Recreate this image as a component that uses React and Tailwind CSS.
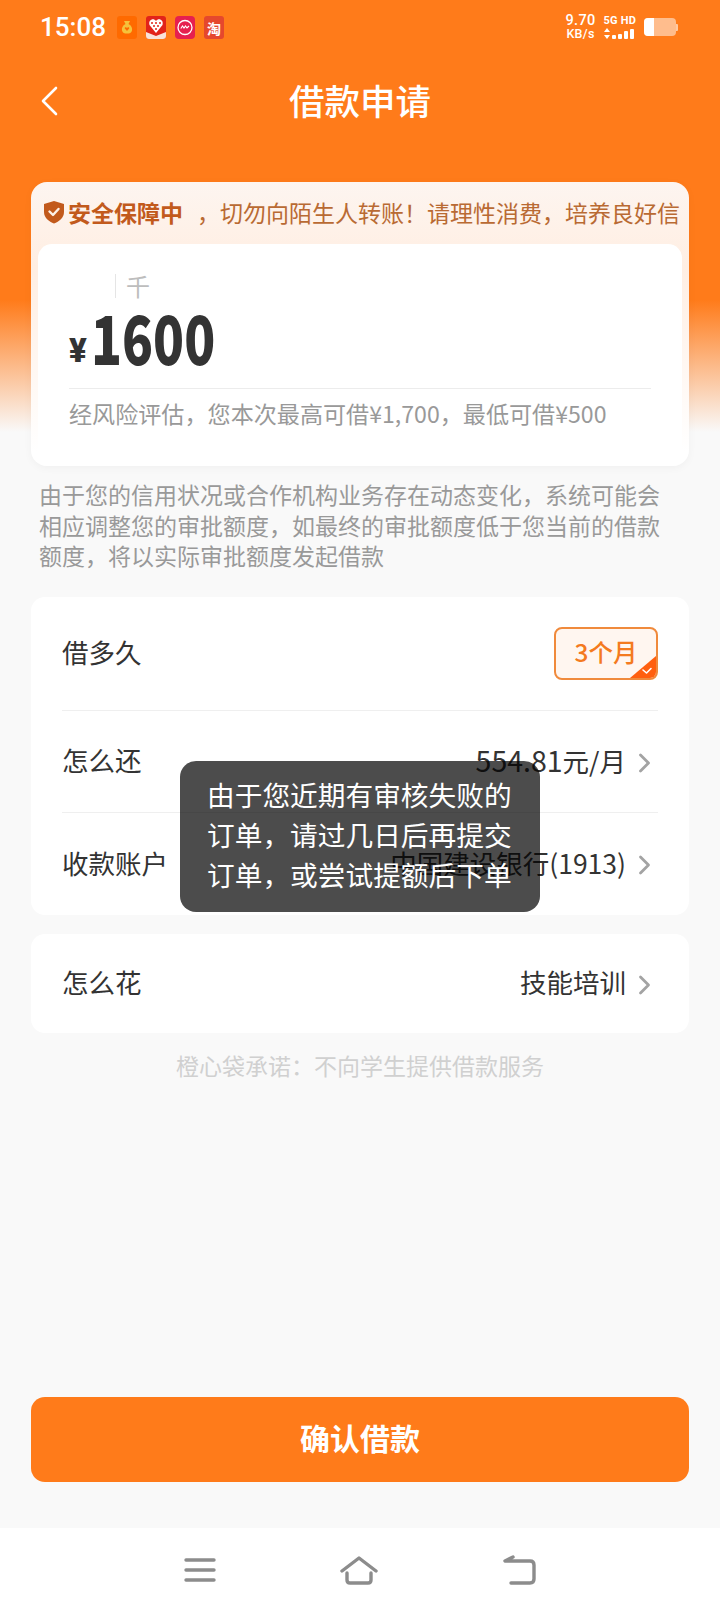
const cjk = "font-['Noto_Sans_CJK_SC','Noto_Sans',sans-serif]";

const Shield = () => (
    <svg width="22" height="24" viewBox="0 0 22 24" className="shrink-0">
        <path d="M11 1 L21 4 V12 C21 18 16 21.5 11 23.5 C6 21.5 1 18 1 12 V4 Z" fill="#c25a1c" />
        <path d="M6.5 11.5 L10 15 L15.5 9" fill="none" stroke="#fdf1e8" strokeWidth="2.4" strokeLinecap="round" strokeLinejoin="round" />
    </svg>
);

const Chevron = () => (
    <svg width="13" height="20" viewBox="0 0 13 20" fill="none" stroke="#a3a3a3" strokeWidth="2.8" strokeLinecap="round" strokeLinejoin="round" className="ml-[12px] mr-[7px] mt-[3px]">
        <path d="M2.5 2 L10.5 10 L2.5 18" />
    </svg>
);

const StatusApps = () => (
    <div className="flex items-center gap-[9px] ml-[11px] mt-[1px]">
        <svg width="20" height="23" viewBox="0 0 20 23">
            <rect width="20" height="23" rx="3" fill="#ff6a00" />
            <path d="M7 5 H13 L11.5 8 C14.5 9.5 15.5 12 15 14.5 C14.5 17 12.5 17.5 10 17.5 C7.5 17.5 5.5 17 5 14.5 C4.5 12 5.5 9.5 8.5 8 Z" fill="#f5c23a" />
            <path d="M10 15 L7.8 12.6 C7.4 11.4 9.2 10.8 10 11.9 C10.8 10.8 12.6 11.4 12.2 12.6 Z" fill="#ff6a00" />
        </svg>
        <svg width="20" height="23" viewBox="0 0 20 23">
            <rect width="20" height="23" rx="3" fill="#e2231a" />
            <path d="M10 17 L3.5 9 C2 4 7.5 1.5 10 5 C12.5 1.5 18 4 16.5 9 Z" fill="#fff" />
            <path d="M5 7 H7 M9 7 H11 M13 7 H15 M7 10 H9 M11 10 H13 M9 13 H11" stroke="#e2231a" strokeWidth="1.6" />
            <path d="M0 16 L10 20 L20 16 V20 Q20 23 17 23 H3 Q0 23 0 20 Z" fill="#f8e3da" />
        </svg>
        <svg width="20" height="23" viewBox="0 0 20 23">
            <rect width="20" height="23" rx="4" fill="#e6204f" />
            <circle cx="10" cy="11.5" r="7" fill="none" stroke="#fff" strokeWidth="1.3" />
            <path d="M5.8 12.5 L7.5 10 L9 12 L10.5 10 L12 12 L14 10" fill="none" stroke="#fff" strokeWidth="1.1" />
        </svg>
        <div className="w-[20px] h-[23px] rounded-[3px] bg-[#e5482d] flex items-center justify-center">
            <span className="text-[14px] leading-[20px] font-bold text-white font-['Noto_Sans_CJK_SC',sans-serif]">淘</span>
        </div>
    </div>
);

const StatusRight = () => (
    <div className="flex items-center text-white font-['Roboto',sans-serif]">
        <div className="flex flex-col items-center gap-[1px] text-[12.5px] leading-[12px] font-medium tracking-[0.3px]">
            <span className="text-[14.5px] leading-[13px]">9.70</span>
            <span>KB/s</span>
        </div>
        <div className="flex flex-col ml-[8px] gap-[2px]">
            <span className="text-[11px] leading-[11px] font-bold tracking-[0.2px]">5G HD</span>
            <div className="flex items-end gap-[2px] h-[11px]">
                <svg width="6" height="11" viewBox="0 0 6 11">
                    <path d="M3 0 L6 4 H0 Z M3 11 L0 7 H6 Z" fill="#fff" />
                </svg>
                <div className="w-[4px] h-[4px] bg-white rounded-[1px]" />
                <div className="w-[4px] h-[5px] bg-white rounded-[1px]" />
                <div className="w-[4px] h-[8px] bg-white rounded-[1px]" />
                <div className="w-[4px] h-[10px] bg-white rounded-[1px]" />
            </div>
        </div>
        <div className="flex items-center ml-[8px]">
            <div className="w-[32px] h-[18px] rounded-[4px] bg-white/50 overflow-hidden">
                <div className="w-[10px] h-full bg-white" />
            </div>
            <div className="w-[2px] h-[7px] bg-white/60 rounded-r-[1px]" />
        </div>
    </div>
);

const Row = ({ label, children, border }) => (
    <div className={`h-full flex items-center justify-between ${border ? "border-b border-[#efefef]" : ""}`}>
        <span className="text-[26.5px] text-[#333333] pb-[2px]">{label}</span>
        <div className="flex items-center">
            <span className="text-[26.5px] text-[#333333] pb-[2px]">{children}</span>
            <Chevron />
        </div>
    </div>
);

const Toast = () => (
    <div className="absolute left-[180px] top-[761px] w-[360px] h-[151px] rounded-[16px] bg-black/70 pl-[27px] pt-[13px] text-[27.7px] leading-[40px] text-white whitespace-nowrap">
        <p>由于您近期有审核失败的</p>
        <p>订单，请过几日后再提交</p>
        <p>订单，或尝试提额后下单</p>
    </div>
);

const App = () => {
    return (
        <div className={`relative w-[720px] h-[1612px] overflow-hidden flex flex-col ${cjk} bg-[linear-gradient(180deg,#ff7b1a_0px,#ff7b1a_300px,#f9f9f9_432px,#f9f9f9_100%)]`}>
            {/* status bar */}
            <div className="h-[54px] pl-[40px] pr-[42px] flex items-center justify-between">
                <div className="flex items-center">
                    <span className="text-[26px] font-medium text-white font-['Roboto',sans-serif]">15:08</span>
                    <StatusApps />
                </div>
                <StatusRight />
            </div>

            {/* nav */}
            <div className="h-[94px] relative flex items-center justify-center">
                <svg width="18" height="30" viewBox="0 0 18 30" fill="none" stroke="#ffffff" strokeWidth="2.6" strokeLinecap="round" strokeLinejoin="round" className="absolute left-[40px]">
                    <path d="M16 2 L3 15 L16 28" />
                </svg>
                <h1 className="text-[35.5px] font-medium text-white pb-[2px]">借款申请</h1>
            </div>

            {/* amount */}
            <div className="mt-[34px] mx-[31px] h-[284px] rounded-[16px] px-[7px] bg-[linear-gradient(180deg,#fdf5f0_0%,#ffeee2_30%,#ffffff_95%)] shadow-[0_2px_8px_rgba(0,0,0,0.04)]">
                <div className="h-[62px] pb-[2px] flex items-center whitespace-nowrap overflow-hidden">
                    <div className="ml-[5px] mr-[3px]"><Shield /></div>
                    <span className="text-[23px] font-bold text-[#c25a1c]">安全保障中</span>
                    <span className="ml-[14px] text-[23px] text-[#b96a33]">，切勿向陌生人转账！请理性消费，培养良好信</span>
                </div>
                <div className="h-[222px] rounded-[14px] bg-white px-[31px]">
                    <div className="pt-[28px] h-[56px] flex items-center pl-[46px]">
                        <div className="w-[1px] h-[24px] bg-[#e5e5e5]" />
                        <span className="ml-[10px] text-[24px] leading-[24px] text-[#bdbdbd]">千</span>
                    </div>
                    <div className="h-[89px] border-b border-[#ececec] flex items-center">
                        <span className="text-[33px] font-black text-[#333333] mt-[14px] font-['Roboto',sans-serif]">¥</span>
                        <span className="ml-[4px] mb-[16px] inline-block origin-left scale-x-[0.75] text-[68px] leading-[68px] font-black text-[#333333]">1600</span>
                    </div>
                    <p className="mt-[9px] text-[23.1px] leading-[30px] text-[#999999] whitespace-nowrap">经风险评估，您本次最高可借¥1,700，最低可借¥500</p>
                </div>
            </div>

            <p className="mt-[13px] ml-[39px] mr-[40px] text-[23px] leading-[30.6px] text-[#999999]">由于您的信用状况或合作机构业务存在动态变化，系统可能会相应调整您的审批额度，如最终的审批额度低于您当前的借款额度，将以实际审批额度发起借款</p>

            {/* loan details */}
            <div className="mt-[26px] mx-[31px] rounded-[14px] bg-white px-[31px]">
                <div className="h-[114px] border-b border-[#efefef] flex items-center justify-between">
                    <span className="text-[26.5px] text-[#333333] pb-[2px]">借多久</span>
                    <div className="relative w-[104px] h-[53px] rounded-[8px] border-2 border-[#f08a3c] bg-[#fff6f0] flex items-center justify-center overflow-hidden">
                        <span className="text-[24.5px] font-medium text-[#f47a20] pb-[2px]">3个月</span>
                        <svg width="26" height="22" viewBox="0 0 26 22" className="absolute right-0 bottom-0">
                            <path d="M26 0 V22 H0 Z" fill="#ff5f0f" />
                            <path d="M13 14 L16.5 17 L21 12.5" fill="none" stroke="#ffffff" strokeWidth="1.6" strokeLinecap="round" strokeLinejoin="round" />
                        </svg>
                    </div>
                </div>
                <div className="h-[102px]">
                    <Row label="怎么还" border><span className="text-[28.5px]">554.81</span>元/月</Row>
                </div>
                <div className="h-[102px]">
                    <Row label="收款账户">中国建设银行(1913)</Row>
                </div>
            </div>

            <div className="mt-[19px] mx-[31px] h-[99px] rounded-[14px] bg-white px-[31px]">
                <Row label="怎么花">技能培训</Row>
            </div>

            <p className="mt-[17px] text-center text-[23px] leading-[30px] text-[#d0d0d0]">橙心袋承诺：不向学生提供借款服务</p>

            <div className="flex-1" />

            <div className="mx-[31px] h-[85px] mb-[46px] rounded-[14px] bg-[#ff7b1a] flex items-center justify-center">
                <span className="text-[30px] font-bold text-white pb-[5px]">确认借款</span>
            </div>

            {/* system nav */}
            <div className="h-[84px] bg-white flex items-center justify-center gap-[124px]">
                <svg width="32" height="26" viewBox="0 0 32 26" fill="none" stroke="#8c8c8c" strokeWidth="3.4" strokeLinecap="round">
                    <path d="M2 3 H30 M2 13 H30 M2 23 H30" />
                </svg>
                <svg width="38" height="30" viewBox="0 0 38 30" fill="none" stroke="#8c8c8c" strokeWidth="3.4" strokeLinecap="round" strokeLinejoin="round">
                    <path d="M2 16 L19 3 L36 16" />
                    <path d="M7 18 V25 Q7 28 10 28 H28 Q31 28 31 25 V18" />
                </svg>
                <svg width="34" height="30" viewBox="0 0 34 30" fill="none" stroke="#8c8c8c" strokeWidth="3.4" strokeLinecap="round" strokeLinejoin="round">
                    <path d="M11 2 L3 6 H28 Q32 6 32 10 V24 Q32 28 28 28 H9" />
                </svg>
            </div>

            <Toast />
        </div>
    );
};

export default App;
